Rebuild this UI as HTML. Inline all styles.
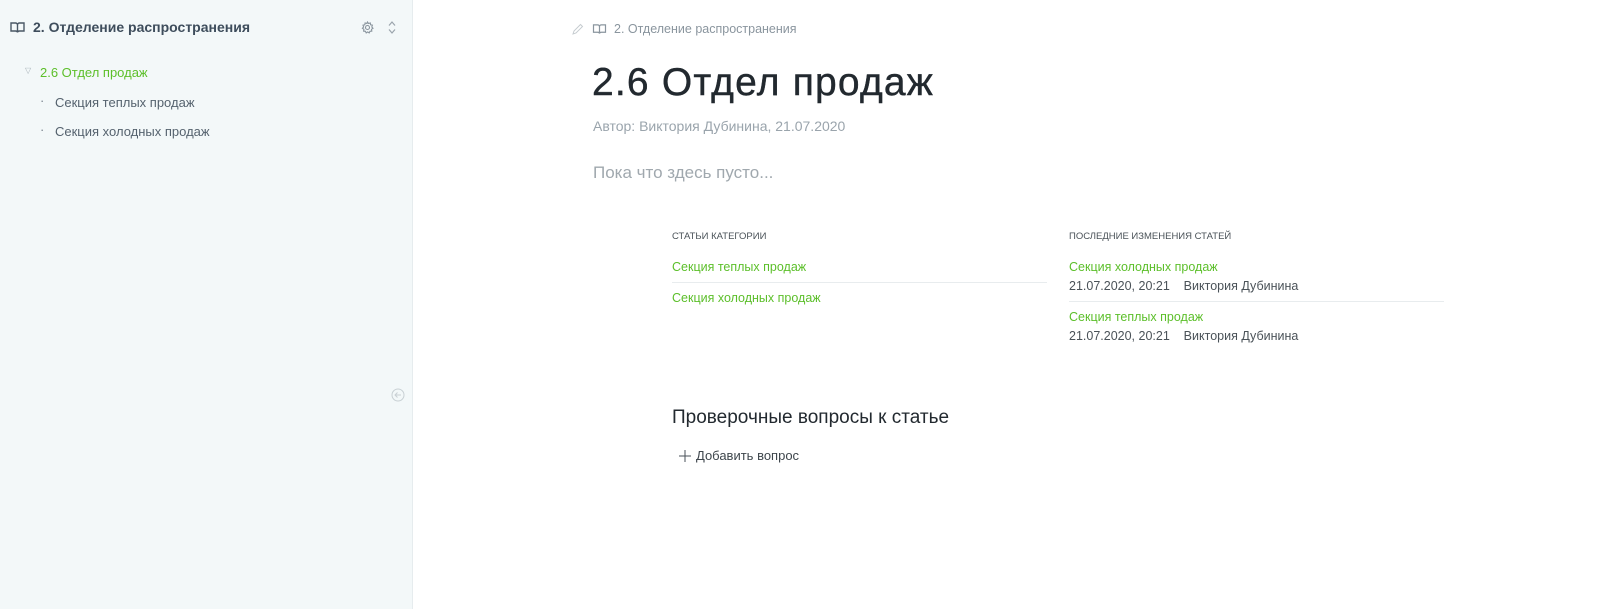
<!DOCTYPE html>
<html><head><meta charset="utf-8"><style>
*{margin:0;padding:0;box-sizing:border-box}
body{width:1600px;height:609px;background:#fff;font-family:"Liberation Sans",sans-serif;position:relative;overflow:hidden}
.side{position:absolute;left:0;top:0;width:413px;height:609px;background:#f3f8f9;border-right:1px solid #e6ecee}
.abs{position:absolute;white-space:nowrap}
.g{color:#5cbf2a}
</style></head><body>
<div class="side">
  <svg class="abs" style="left:10px;top:21px" width="15" height="13" viewBox="0 0 15 13" fill="none" stroke="#4a5866" stroke-width="1.4"><path d="M1 2h4.5c1 0 2 .8 2 2v7.5c0-1-1-1.5-2-1.5H1z M14 2H9.5c-1 0-2 .8-2 2v7.5c0-1 1-1.5 2-1.5H14z"/></svg>
  <div class="abs" style="left:33px;top:19px;font-size:14px;font-weight:bold;color:#3e4d5c">2. Отделение распространения</div>
  <svg class="abs" style="left:361px;top:21px" width="13" height="13" viewBox="0 0 13 13" fill="none" stroke="#8a959e" stroke-width="1.1"><circle cx="6.5" cy="6.5" r="2"/><path d="M6.5 1l1 1.5 1.8-.5.3 1.8 1.8.4-.6 1.8 1.2 1.3-1.5 1 .3 1.8-1.8.2-.8 1.6-1.5-1-1.5 1-.8-1.6-1.8-.2.3-1.8-1.5-1 1.2-1.3-.6-1.8 1.8-.4.3-1.8 1.8.5z"/></svg>
  <svg class="abs" style="left:387px;top:20px" width="10" height="15" viewBox="0 0 10 15" fill="none" stroke="#9aa4ac" stroke-width="1.2"><path d="M2 5.5l3-3.5 3 3.5M2 9.5l3 3.5 3-3.5"/></svg>
  <div class="abs" style="left:25px;top:66px;font-size:8px;color:#a8b2b8">▽</div>
  <div class="abs g" style="left:40px;top:65px;font-size:13px">2.6 Отдел продаж</div>
  <div class="abs" style="left:40px;top:93px;font-size:13px;color:#7a858e">·</div>
  <div class="abs" style="left:55px;top:95px;font-size:13px;color:#55626e">Секция теплых продаж</div>
  <div class="abs" style="left:40px;top:122px;font-size:13px;color:#7a858e">·</div>
  <div class="abs" style="left:55px;top:124px;font-size:13px;color:#55626e">Секция холодных продаж</div>
  <svg class="abs" style="left:391px;top:388px" width="14" height="14" viewBox="0 0 14 14" fill="none" stroke="#c8d0d4" stroke-width="1"><circle cx="7" cy="7" r="6"/><path d="M10 7H4M6.5 4.5L4 7l2.5 2.5"/></svg>
</div>
<svg class="abs" style="left:571px;top:23px" width="13" height="13" viewBox="0 0 13 13" fill="none" stroke="#c6ccd0" stroke-width="1"><path d="M2 11l1-3 6.5-6.5 2 2L5 10z"/></svg>
<svg class="abs" style="left:592px;top:23px" width="15" height="12" viewBox="0 0 15 13" fill="none" stroke="#8a959e" stroke-width="1.3"><path d="M1 2h4.5c1 0 2 .8 2 2v7.5c0-1-1-1.5-2-1.5H1z M14 2H9.5c-1 0-2 .8-2 2v7.5c0-1 1-1.5 2-1.5H14z"/></svg>
<div class="abs" style="left:614px;top:22px;font-size:12.5px;color:#8a959e">2. Отделение распространения</div>
<div class="abs" style="left:592px;top:61px;font-size:39px;letter-spacing:1.2px;color:#22292f;-webkit-text-stroke:0.4px #22292f">2.6 Отдел продаж</div>
<div class="abs" style="left:593px;top:118px;font-size:14px;color:#9aa4ac">Автор: Виктория Дубинина, 21.07.2020</div>
<div class="abs" style="left:593px;top:163px;font-size:17px;color:#a0a8ae">Пока что здесь пусто...</div>
<div class="abs" style="left:672px;top:231px;font-size:9.5px;color:#4a5258">СТАТЬИ КАТЕГОРИИ</div>
<div class="abs g" style="left:672px;top:260px;font-size:12.5px">Секция теплых продаж</div>
<div class="abs" style="left:672px;top:282px;width:375px;height:1px;background:#e8ecee"></div>
<div class="abs g" style="left:672px;top:291px;font-size:12.5px">Секция холодных продаж</div>
<div class="abs" style="left:1069px;top:231px;font-size:9.5px;color:#4a5258">ПОСЛЕДНИЕ ИЗМЕНЕНИЯ СТАТЕЙ</div>
<div class="abs g" style="left:1069px;top:260px;font-size:12.5px">Секция холодных продаж</div>
<div class="abs" style="left:1069px;top:279px;font-size:12.5px;color:#4a5258">21.07.2020, 20:21 &nbsp;&nbsp; Виктория Дубинина</div>
<div class="abs" style="left:1069px;top:301px;width:375px;height:1px;background:#e8ecee"></div>
<div class="abs g" style="left:1069px;top:310px;font-size:12.5px">Секция теплых продаж</div>
<div class="abs" style="left:1069px;top:329px;font-size:12.5px;color:#4a5258">21.07.2020, 20:21 &nbsp;&nbsp; Виктория Дубинина</div>
<div class="abs" style="left:672px;top:407px;font-size:19px;color:#22292f">Проверочные вопросы к статье</div>
<svg class="abs" style="left:679px;top:450px" width="12" height="12" viewBox="0 0 12 12" stroke="#4a5258" stroke-width="1"><path d="M6 0v12M0 6h12"/></svg>
<div class="abs" style="left:696px;top:448px;font-size:13px;color:#3e464c">Добавить вопрос</div>
</body></html>
